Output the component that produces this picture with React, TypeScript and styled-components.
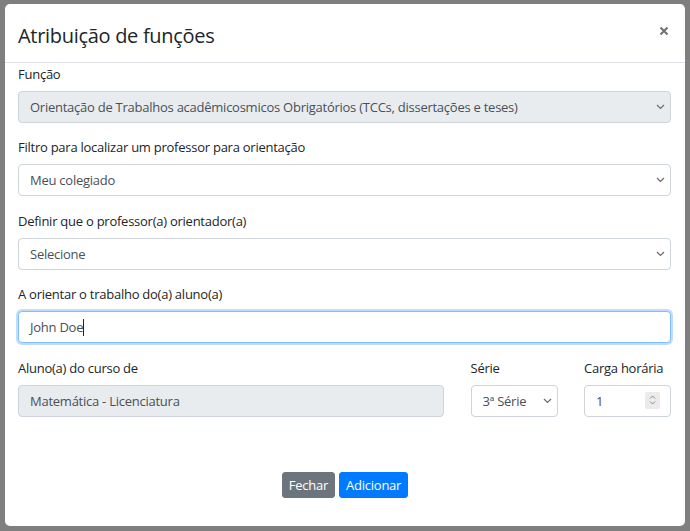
import React from "react";
import styled, { createGlobalStyle } from "styled-components";

const GlobalStyle = createGlobalStyle`
  html, body { margin: 0; padding: 0; }
  body {
    width: 690px;
    height: 531px;
    overflow: hidden;
    font-family: "Open Sans", "Noto Sans", sans-serif;
    color: #212529;
    background: #7f7f7f;
  }
  * { box-sizing: border-box; }
`;

const Backdrop = styled.div`
  width: 690px;
  height: 531px;
  background: #7f7f7f;
  padding: 4px 5px 5px 5px;
`;

const Modal = styled.div`
  width: 680px;
  height: 522px;
  background: #fff;
  border-radius: 5px;
  display: flex;
  flex-direction: column;
`;

const Header = styled.div`
  height: 59px;
  flex: none;
  display: flex;
  align-items: flex-start;
  justify-content: space-between;
  padding: 17px 14px 0 13px;
  border-bottom: 1px solid #dee2e6;
`;

const Title = styled.h5`
  margin: 0;
  font-size: 20px;
  font-weight: 400;
  line-height: 30px;
  letter-spacing: -0.3px;
  color: #212529;
`;

const Close = styled.button`
  border: 0;
  background: transparent;
  padding: 0;
  margin-top: 3px;
  width: 14px;
  height: 14px;
  display: flex;
  align-items: center;
  justify-content: center;
  cursor: pointer;
`;

const Body = styled.div`
  flex: 1;
  padding: 1px 14px 0 13px;
  display: flex;
  flex-direction: column;
`;

const Group = styled.div`
  display: flex;
  flex-direction: column;
  margin-bottom: 14.4px;
`;

const Label = styled.label`
  font-size: 13px;
  letter-spacing: -0.25px;
  line-height: 21px;
  margin-bottom: 6px;
  color: #212529;
  white-space: nowrap;
`;

const Control = styled.div`
  position: relative;
  height: 32px;
`;

const Select = styled.select<{ $disabled?: boolean }>`
  appearance: none;
  -webkit-appearance: none;
  width: 100%;
  height: 32px;
  border: 1px solid #ced4da;
  border-radius: 4px;
  background: ${(p) => (p.$disabled ? "#e9ecef" : "#fff")};
  color: #495057;
  font-family: inherit;
  font-size: 13px;
  letter-spacing: -0.25px;
  padding: 0 24px 0 11px;
  outline: none;
  opacity: 1;
`;

const Chevron = styled.svg`
  position: absolute;
  right: 6px;
  top: 13px;
  pointer-events: none;
`;

const TextField = styled.div<{ $disabled?: boolean; $focus?: boolean }>`
  height: 32px;
  display: flex;
  align-items: center;
  border: 1px solid ${(p) => (p.$focus ? "#80bdff" : "#ced4da")};
  border-radius: 4px;
  background: ${(p) => (p.$disabled ? "#e9ecef" : "#fff")};
  box-shadow: ${(p) => (p.$focus ? "0 0 0 2px rgba(0,123,255,.25)" : "none")};
  color: #495057;
  font-size: 13px;
  letter-spacing: -0.25px;
  padding: 0 11px;
  white-space: nowrap;
`;

const Caret = styled.span`
  display: inline-block;
  width: 1px;
  height: 17px;
  background: #222;
`;

const Row = styled.div`
  display: grid;
  grid-template-columns: 1fr 87px 87px;
  column-gap: 26.5px;
`;

const Spinner = styled.div`
  position: absolute;
  right: 11px;
  top: 7px;
  width: 15px;
  height: 17px;
  background: #ebebeb;
  border-radius: 2px;
  display: flex;
  align-items: center;
  justify-content: center;
`;

const Footer = styled.div`
  flex: none;
  display: flex;
  justify-content: center;
  gap: 4px;
  padding: 0 0 28px 0;
`;

const Button = styled.button<{ $variant: "secondary" | "primary" }>`
  height: 26px;
  border: 1px solid ${(p) => (p.$variant === "primary" ? "#007bff" : "#6c757d")};
  background: ${(p) => (p.$variant === "primary" ? "#007bff" : "#6c757d")};
  color: #fff;
  border-radius: 3px;
  font-family: inherit;
  font-size: 13px;
  letter-spacing: -0.25px;
  padding: 0 6px;
  line-height: 1;
`;

const ChevronIcon = () => (
  <Chevron width="9" height="6" viewBox="0 0 9 6">
    <path d="M1 1 L4.5 4.5 L8 1" fill="none" stroke="#6b6b6b" strokeWidth="1.2" />
  </Chevron>
);

const SelectField = ({ value, disabled }: { value: string; disabled?: boolean }) => (
  <Control>
    <Select $disabled={disabled} disabled={disabled} value={value} onChange={() => {}}>
      <option>{value}</option>
    </Select>
    <ChevronIcon />
  </Control>
);

export default function App() {
  return (
    <>
      <GlobalStyle />
      <Backdrop>
        <Modal>
          <Header>
            <Title>Atribuição de funções</Title>
            <Close aria-label="Fechar">
              <svg width="10" height="10" viewBox="0 0 10 10">
                <path d="M1.5 1.5 L8.5 8.5 M8.5 1.5 L1.5 8.5" stroke="#6f6f6f" strokeWidth="2" />
              </svg>
            </Close>
          </Header>
          <Body>
            <Group>
              <Label>Função</Label>
              <SelectField
                disabled
                value="Orientação de Trabalhos acadêmicosmicos Obrigatórios (TCCs, dissertações e teses)"
              />
            </Group>
            <Group>
              <Label>Filtro para localizar um professor para orientação</Label>
              <SelectField value="Meu colegiado" />
            </Group>
            <Group>
              <Label>Definir que o professor(a) orientador(a)</Label>
              <SelectField value="Selecione" />
            </Group>
            <Group>
              <Label>A orientar o trabalho do(a) aluno(a)</Label>
              <TextField $focus>
                John Doe
                <Caret />
              </TextField>
            </Group>
            <Row>
              <Group>
                <Label>Aluno(a) do curso de</Label>
                <TextField $disabled>Matemática - Licenciatura</TextField>
              </Group>
              <Group>
                <Label>Série</Label>
                <SelectField value="3ª Série" />
              </Group>
              <Group>
                <Label>Carga horária</Label>
                <Control>
                  <TextField>1</TextField>
                  <Spinner>
                    <svg width="7" height="12" viewBox="0 0 7 12">
                      <path d="M1 4.5 L3.5 2 L6 4.5 M1 7.5 L3.5 10 L6 7.5" fill="none" stroke="#8a8a8a" strokeWidth="1" />
                    </svg>
                  </Spinner>
                </Control>
              </Group>
            </Row>
          </Body>
          <Footer>
            <Button $variant="secondary">Fechar</Button>
            <Button $variant="primary">Adicionar</Button>
          </Footer>
        </Modal>
      </Backdrop>
    </>
  );
}
